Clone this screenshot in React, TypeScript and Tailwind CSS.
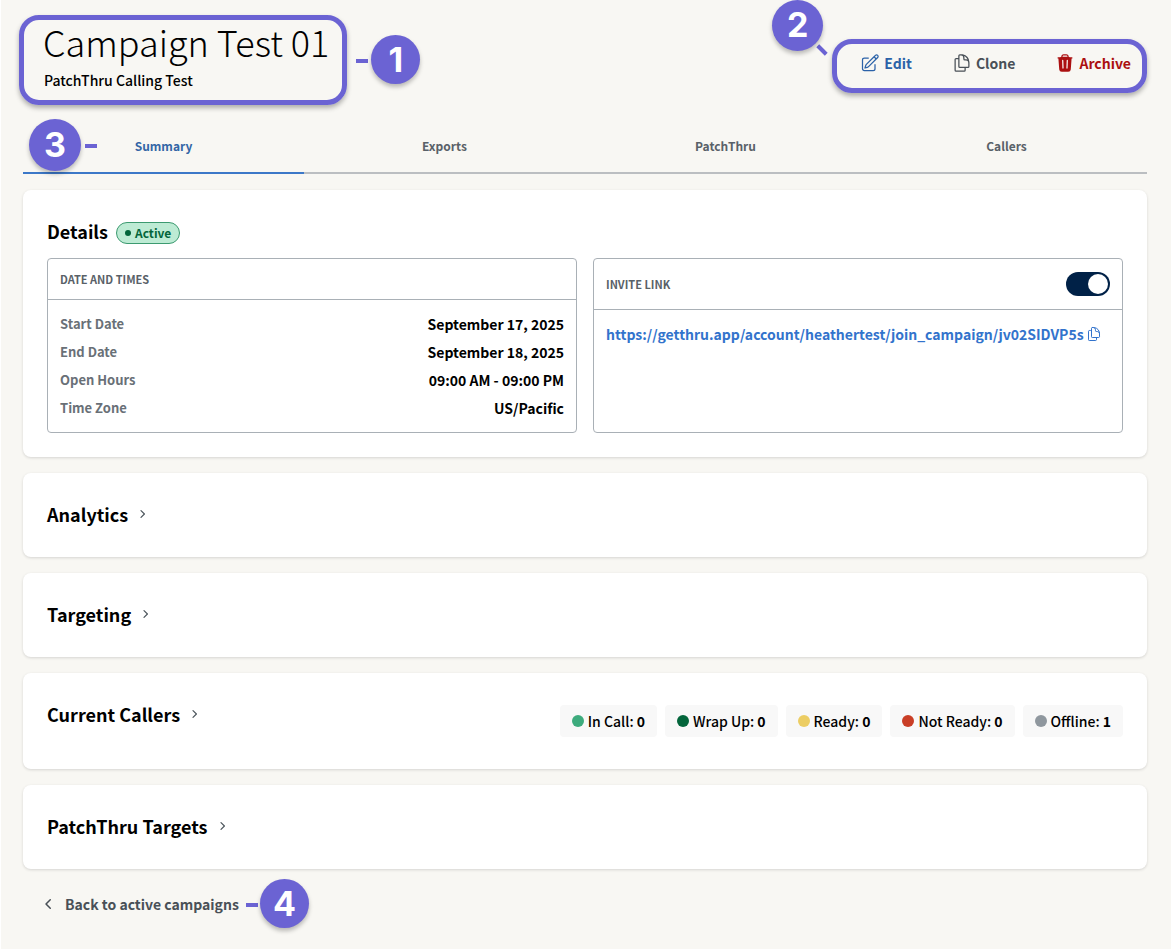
import { useState } from "react";
import type { ReactNode } from "react";
import {
  HiMiniChevronLeft,
  HiMiniChevronRight,
  HiOutlineDocumentDuplicate,
  HiOutlinePencilSquare,
  HiTrash,
} from "react-icons/hi2";

const tabs = ["Summary", "Exports", "PatchThru", "Callers"];

const schedule = [
  { label: "Start Date", value: "September 17, 2025" },
  { label: "End Date", value: "September 18, 2025" },
  { label: "Open Hours", value: "09:00 AM - 09:00 PM" },
  { label: "Time Zone", value: "US/Pacific" },
];

const callerStates = [
  { label: "In Call", count: 0, dot: "bg-[#3dab7d]" },
  { label: "Wrap Up", count: 0, dot: "bg-[#03653b]" },
  { label: "Ready", count: 0, dot: "bg-[#eccd63]" },
  { label: "Not Ready", count: 0, dot: "bg-[#c93e26]" },
  { label: "Offline", count: 1, dot: "bg-[#8f979e]" },
];

function Marker({ n, className }: { n: number; className: string }) {
  return (
    <span
      className={`absolute z-10 flex items-center justify-center rounded-full bg-[#6b63d3] font-['Inter',sans-serif] text-[34px] font-bold text-white shadow-[0_3px_4px_rgba(0,0,0,0.25)] ${className}`}
    >
      {n}
    </span>
  );
}

function Dash({ className }: { className: string }) {
  return <span className={`absolute h-1 w-3 bg-[#6b63d3] ${className}`} />;
}

function Outline({ className }: { className: string }) {
  return (
    <span
      className={`pointer-events-none absolute rounded-[20px] border-5 border-[#6b63d3] shadow-[0_3px_5px_rgba(0,0,0,0.3)] ${className}`}
    />
  );
}

function Card({ children }: { children: ReactNode }) {
  return (
    <section className="rounded-lg bg-white p-6 shadow-[0_1px_3px_rgba(0,0,0,0.14)]">
      {children}
    </section>
  );
}

function Collapsed({ title, children }: { title: string; children?: ReactNode }) {
  return (
    <Card>
      <div className="flex items-start justify-between">
        <h2>
          <button
            type="button"
            aria-expanded="false"
            className="flex h-9 items-center gap-1.5 pb-0.5 text-lg font-bold"
          >
            {title}
            <HiMiniChevronRight className="size-4 text-[#4b545b]" />
          </button>
        </h2>
        {children}
      </div>
    </Card>
  );
}

export default function App() {
  const [inviteOn, setInviteOn] = useState(true);

  return (
    <div className="min-h-screen border-l border-white bg-[#f8f7f3] pr-6 pl-[22px] font-['Noto_Sans_CJK_JP',sans-serif] text-black">
      <header className="flex items-start justify-between pt-6 pr-4 pl-5">
        <div className="relative">
          <h1 className="mb-2 text-4xl leading-[34px] font-light">Campaign Test 01</h1>
          <p className="pl-px text-sm leading-7 font-medium">PatchThru Calling Test</p>
          <Outline className="-top-[9px] -right-[18px] -bottom-[11px] -left-6" />
          <Dash className="top-[35px] -right-[39px]" />
          <Marker n={1} className="top-[11px] -right-[91px] size-[49px]" />
        </div>
        <div className="relative mt-6 flex h-8 items-center gap-10 pb-0.5 text-sm font-bold">
          <button type="button" className="flex items-center gap-1 text-[#2b62a8]">
            <HiOutlinePencilSquare className="size-5" />
            Edit
          </button>
          <button type="button" className="flex items-center gap-1 text-[#495057]">
            <HiOutlineDocumentDuplicate className="size-5" />
            Clone
          </button>
          <button type="button" className="flex items-center gap-1 text-[#ab1010]">
            <HiTrash className="size-5" />
            Archive
          </button>
          <Outline className="-top-[9px] -right-4 -bottom-[13px] -left-7" />
          <Marker n={2} className="-top-12 -left-[88px] size-[51px]" />
          <Dash className="-left-11 rotate-45 top-0" />
        </div>
      </header>

      <nav
        role="tablist"
        className="relative mt-6 grid grid-cols-4 border-b-2 border-[#bbbec1] text-xs font-bold text-[#596168]"
      >
        {tabs.map((tab, i) => (
          <button
            key={tab}
            type="button"
            role="tab"
            aria-selected={i === 0}
            className={
              i === 0
                ? "-mb-0.5 h-14 border-b-2 border-[#3c78c8] pt-0.5 text-[#3366a6]"
                : "-mb-0.5 h-14 border-b-2 border-transparent pt-0.5"
            }
          >
            {tab}
          </button>
        ))}
        <Marker n={3} className="top-px left-1.5 size-[52px]" />
        <Dash className="top-[26px] left-[62px]" />
      </nav>

      <main className="mt-4 flex flex-col gap-4">
        <Card>
          <div className="flex h-9 items-center gap-2">
            <h2 className="pb-0.5 text-lg font-bold">Details</h2>
            <span className="mt-0.5 flex h-[22px] items-center gap-1 rounded-full border border-[#3c9a70] bg-[#bdebd4] px-2 text-xs font-bold text-[#03653b]">
              <span className="size-1.5 rounded-full bg-[#03653b]" />
              Active
            </span>
          </div>
          <div className="mt-2 grid grid-cols-2 gap-4">
            <div className="rounded border border-[#a9b0b6]">
              <h3 className="border-b border-[#a9b0b6] px-3 text-[11px] leading-10 font-bold text-[#596168]">
                DATE AND TIMES
              </h3>
              <dl className="px-3 py-2.5">
                {schedule.map((row) => (
                  <div key={row.label} className="flex h-7 items-center justify-between">
                    <dt className="text-[13px] font-bold text-[#697077]">{row.label}</dt>
                    <dd className="text-sm font-bold">{row.value}</dd>
                  </div>
                ))}
              </dl>
            </div>
            <div className="rounded border border-[#a9b0b6]">
              <div className="flex h-[51px] items-center justify-between border-b border-[#a9b0b6] px-3">
                <label htmlFor="invite" className="text-[11px] font-bold text-[#596168]">
                  INVITE LINK
                </label>
                <input
                  id="invite"
                  type="checkbox"
                  role="switch"
                  checked={inviteOn}
                  onChange={(e) => setInviteOn(e.target.checked)}
                  className="flex h-6 w-11 appearance-none items-center rounded-full bg-[#8f979e] px-0.5 before:size-5 before:rounded-full before:bg-white checked:justify-end checked:bg-[#002147]"
                />
              </div>
              <div className="flex h-12 items-center gap-0.5 px-3 text-sm font-bold text-[#3273cc]">
                <a href="https://getthru.app/account/heathertest/join_campaign/jv02SIDVP5s">
                  https://getthru.app/account/heathertest/join_campaign/jv02SIDVP5s
                </a>
                <button type="button" aria-label="Copy link">
                  <HiOutlineDocumentDuplicate className="size-4" />
                </button>
              </div>
            </div>
          </div>
        </Card>

        <Collapsed title="Analytics" />
        <Collapsed title="Targeting" />
        <Collapsed title="Current Callers">
          <ul className="flex gap-2 py-2 text-sm font-medium">
            {callerStates.map((s) => (
              <li key={s.label} className="flex h-8 items-center gap-1 rounded bg-[#f8f8f8] px-3">
                <span className={`size-3 rounded-full ${s.dot}`} />
                <span>
                  {s.label}: <b>{s.count}</b>
                </span>
              </li>
            ))}
          </ul>
        </Collapsed>
        <Collapsed title="PatchThru Targets" />
      </main>

      <footer className="flex pt-5 pb-7 pl-4">
        <div className="relative">
          <a
            href="#campaigns"
            className="flex h-8 items-center gap-1.5 pb-0.5 text-sm font-bold text-[#495057]"
          >
            <HiMiniChevronLeft className="size-5" />
            Back to active campaigns
          </a>
          <Dash className="top-[14px] -right-[19px]" />
          <Marker n={4} className="-top-2.5 -right-[70px] size-[49px]" />
        </div>
      </footer>
    </div>
  );
}
